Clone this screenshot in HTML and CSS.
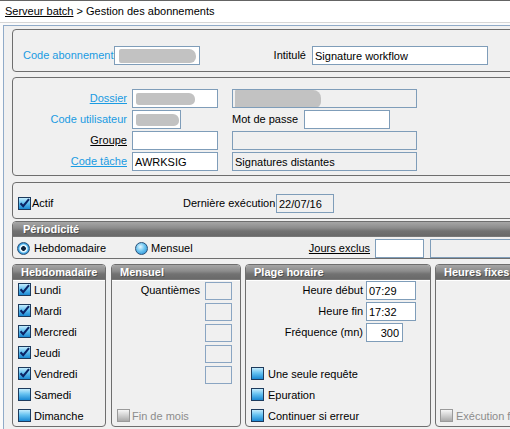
FILE: index.html
```html
<!DOCTYPE html>
<html lang="fr">
<head>
<meta charset="utf-8">
<title>Gestion des abonnements</title>
<link rel="stylesheet" href="styles.css">
</head>
<body>
<div class="top"><span class="u">Serveur batch</span> &gt; Gestion des abonnements</div>
<div class="main">
  <div class="box box1">
    <span class="lbl blue w-abo">Code abonnement</span>
    <div class="inp w86"><div class="blob b1"></div></div>
    <span class="lbl w-int">Intitulé</span>
    <div class="inp w176">Signature workflow</div>
  </div>

  <div class="box box2">
    <div class="row">
      <span class="lbl rl blue u">Dossier</span>
      <div class="inp w86"><div class="blob b2"></div></div>
      <div class="inp ro w185 ml14"><div class="blob b3"></div></div>
    </div>
    <div class="row">
      <span class="lbl rl blue">Code utilisateur</span>
      <div class="inp w49"><div class="blob b4"></div></div>
      <span class="lbl w-mdp">Mot de passe</span>
      <div class="inp w86"></div>
    </div>
    <div class="row">
      <span class="lbl rl u">Groupe</span>
      <div class="inp w86"></div>
      <div class="inp ro w185 ml14"></div>
    </div>
    <div class="row">
      <span class="lbl rl blue u">Code tâche</span>
      <div class="inp w86">AWRKSIG</div>
      <div class="inp ro w185 ml14">Signatures distantes</div>
    </div>
  </div>

  <div class="box box3">
    <div class="actif">
      <span class="cb on"><svg viewBox="0 0 11 11" width="11" height="11"><path d="M1.5 5.2 L4.2 8.2 L10 1.2" fill="none" stroke="#0b2466" stroke-width="2.1"/></svg></span>
      <span class="lbl">Actif</span>
    </div>
    <span class="lbl w-der">Dernière exécution</span>
    <div class="inp ro w58">22/07/16</div>
  </div>

  <div class="box period">
    <div class="ghead">Périodicité</div>
    <div class="pbody">
      <div class="ritem w118"><span class="rb on"></span><span class="lbl">Hebdomadaire</span></div>
      <div class="ritem w120 g3"><span class="rb"></span><span class="lbl">Mensuel</span></div>
      <span class="lbl u w-jours">Jours exclus</span>
      <div class="inp w49"></div>
      <div class="inp ro w100 ml6"></div>
    </div>
  </div>

  <div class="panels">
    <div class="panel">
      <div class="ghead phead">Hebdomadaire</div>
      <div class="hbody">
        <div class="crow"><span class="cb on"><svg viewBox="0 0 11 11" width="11" height="11"><path d="M1.5 5.2 L4.2 8.2 L10 1.2" fill="none" stroke="#0b2466" stroke-width="2.1"/></svg></span><span>Lundi</span></div>
        <div class="crow"><span class="cb on"><svg viewBox="0 0 11 11" width="11" height="11"><path d="M1.5 5.2 L4.2 8.2 L10 1.2" fill="none" stroke="#0b2466" stroke-width="2.1"/></svg></span><span>Mardi</span></div>
        <div class="crow"><span class="cb on"><svg viewBox="0 0 11 11" width="11" height="11"><path d="M1.5 5.2 L4.2 8.2 L10 1.2" fill="none" stroke="#0b2466" stroke-width="2.1"/></svg></span><span>Mercredi</span></div>
        <div class="crow"><span class="cb on"><svg viewBox="0 0 11 11" width="11" height="11"><path d="M1.5 5.2 L4.2 8.2 L10 1.2" fill="none" stroke="#0b2466" stroke-width="2.1"/></svg></span><span>Jeudi</span></div>
        <div class="crow"><span class="cb on"><svg viewBox="0 0 11 11" width="11" height="11"><path d="M1.5 5.2 L4.2 8.2 L10 1.2" fill="none" stroke="#0b2466" stroke-width="2.1"/></svg></span><span>Vendredi</span></div>
        <div class="crow"><span class="cb"></span><span>Samedi</span></div>
        <div class="crow"><span class="cb"></span><span>Dimanche</span></div>
      </div>
    </div>

    <div class="panel">
      <div class="ghead phead">Mensuel</div>
      <div class="mbody">
        <div class="qrow"><span class="lbl">Quantièmes</span><div class="qbox"></div></div>
        <div class="qbox"></div>
        <div class="qbox"></div>
        <div class="qbox"></div>
        <div class="qbox"></div>
        <div class="crow bottom-row dis"><span class="cb off"></span><span>Fin de mois</span></div>
      </div>
    </div>

    <div class="panel">
      <div class="ghead phead">Plage horaire</div>
      <div class="pl-body">
        <div class="frow"><span class="lbl w117">Heure début</span><div class="inp w50">07:29</div></div>
        <div class="frow"><span class="lbl w117">Heure fin</span><div class="inp w50">17:32</div></div>
        <div class="frow"><span class="lbl w117">Fréquence (mn)</span><div class="inp w37 num">300</div></div>
        <div class="checks">
          <div class="crow g4"><span class="cb"></span><span>Une seule requête</span></div>
          <div class="crow g4"><span class="cb"></span><span>Epuration</span></div>
          <div class="crow g4"><span class="cb"></span><span>Continuer si erreur</span></div>
        </div>
      </div>
    </div>

    <div class="panel">
      <div class="ghead phead">Heures fixes</div>
      <div class="hf-body">
        <div class="crow bottom-row dis g3 pl4"><span class="cb off"></span><span>Exécution fixe</span></div>
      </div>
    </div>
  </div>
</div>
</body>
</html>
```

FILE: styles.css
```css
* { box-sizing: border-box; }
html, body { margin: 0; padding: 0; }
body {
  width: 510px;
  height: 429px;
  overflow: hidden;
  background: #fafafa;
  font-family: "Liberation Sans", Arial, sans-serif;
  font-size: 11px;
  color: #000;
}
.top {
  height: 23px;
  background: #fff;
  border-top: 1px solid #646464;
  border-bottom: 1px solid #d6d6d6;
  padding-left: 5px;
  line-height: 20px;
  white-space: nowrap;
}
.u { text-decoration: underline; }
.blue { color: #1a9be2; }

.main {
  margin-top: 2px;
  margin-left: 3px;
  border-top: 1px solid #90abc9;
  border-left: 1px solid #90abc9;
  background: #f0f0f0;
  padding: 3px 0 0 8px;
  width: 540px;
  height: 404px;
}

.box {
  border: 1px solid #6e6e6e;
  border-radius: 4px;
  width: 520px;
}
.lbl { line-height: 19px; white-space: nowrap; }

.inp {
  height: 19px;
  border: 1px solid #7f9db9;
  background: #fff;
  padding: 0 2px;
  display: flex;
  align-items: center;
  white-space: nowrap;
  overflow: hidden;
  flex: none;
}
.inp.ro { background: #f0f0f0; }
.num { justify-content: flex-end; padding-right: 3px; }

.w37 { width: 37px; }
.w49 { width: 49px; }
.w50 { width: 50px; }
.w58 { width: 58px; }
.w86 { width: 86px; }
.w100 { width: 100px; }
.w176 { width: 176px; }
.w185 { width: 185px; }
.ml6 { margin-left: 6px; }
.ml14 { margin-left: 14px; }

.blob {
  background: #c2c2c2;
  filter: blur(0.6px);
  flex: none;
}
.b1 { width: 77px; height: 14px; margin-left: 2px; border-radius: 2px 7px 6px 2px; }
.b2 { width: 59px; height: 12px; margin-left: 1px; border-radius: 2px 6px 5px 3px; }
.b3 { width: 86px; height: 18px; margin-left: 0; border-radius: 1px 8px 6px 1px; }
.b4 { width: 43px; height: 12px; margin-left: 1px; border-radius: 2px 6px 5px 3px; }

/* box 1 */
.box1 {
  height: 43px;
  padding: 16px 0 0 10px;
  display: flex;
  align-items: flex-start;
}
.w-abo { width: 91px; }
.w-int { width: 112px; text-align: right; padding-right: 6px; }

/* box 2 */
.box2 {
  margin-top: 5px;
  height: 99px;
  padding-top: 11px;
  display: flex;
  flex-direction: column;
  gap: 2px;
}
.row { display: flex; align-items: center; height: 19px; }
.rl { width: 114px; text-align: right; margin-right: 5px; flex: none; }
.w-mdp { width: 72px; margin-left: 51px; }

/* box 3 */
.box3 {
  margin-top: 6px;
  height: 37px;
  padding: 11px 0 0 5px;
  display: flex;
  align-items: flex-start;
}
.actif { width: 165px; height: 19px; display: flex; align-items: center; gap: 1px; }
.w-der { width: 93px; }

/* checkboxes / radios */
.cb {
  width: 13px;
  height: 13px;
  border: 1px solid #1d3a5c;
  background: linear-gradient(#c4ecfd 0%, #66c2f1 45%, #1a88d3 100%);
  flex: none;
  display: flex;
  align-items: center;
  justify-content: center;
}
.cb svg { display: block; }
.cb.off {
  border-color: #9a9a9a;
  background: linear-gradient(#f6f6f6 0%, #d0d0d0 50%, #a9a9a9 100%);
}
.rb {
  width: 13px;
  height: 13px;
  border-radius: 50%;
  border: 1px solid #2a5178;
  background: radial-gradient(circle at 40% 35%, #e4f7ff 0, #6cc4f0 45%, #1a84cf 100%);
  flex: none;
}
.rb.on {
  background: radial-gradient(circle, #0f223c 0, #0f223c 2px, #f2fbff 2.7px, #cfeefd 3.6px, #4eb0e8 4.6px, #1b7cc6 6px);
}

/* period */
.period {
  margin-top: 2px;
  height: 38px;
  overflow: hidden;
}
.ghead {
  height: 15px;
  line-height: 15px;
  background: linear-gradient(#a6a6a6 0%, #8c8c8c 40%, #727272 60%, #6a6a6a 90%, #7e7e7e 100%);
  color: #fff;
  font-weight: bold;
  padding-left: 10px;
  text-shadow: 1px 1px 0 rgba(40, 40, 40, 0.45);
  white-space: nowrap;
}
.pbody {
  padding: 1px 0 0 4px;
  display: flex;
  align-items: center;
  height: 21px;
}
.ritem { display: flex; align-items: center; gap: 4px; flex: none; }
.ritem.g3 { gap: 3px; }
.w118 { width: 118px; }
.w120 { width: 120px; }
.w-jours { width: 120px; text-align: right; padding-right: 5px; flex: none; }

/* bottom panels */
.panels {
  margin-top: 5px;
  display: grid;
  grid-template-columns: 94px 130px 185px 100px;
  column-gap: 5px;
  height: 163px;
}
.panels .panel:nth-child(3) { margin-left: -1px; }
.panels .panel:nth-child(4) { margin-left: -1px; }
.panel {
  border: 1px solid #6e6e6e;
  border-radius: 4px;
  overflow: hidden;
  display: flex;
  flex-direction: column;
  background: #f0f0f0;
}
.phead {
  padding-left: 8px;
  border-bottom: 1px solid #fff;
  flex: none;
  height: 16px;
}
.crow {
  height: 21px;
  display: flex;
  align-items: center;
  gap: 3px;
  white-space: nowrap;
  flex: none;
}
.crow.g4 { gap: 4px; }
.dis { color: #8c8c8c; }
.hbody { padding-left: 5px; margin-top: -2px; display: flex; flex-direction: column; }

.mbody {
  flex: 1;
  display: flex;
  flex-direction: column;
  align-items: flex-end;
  gap: 3px;
  padding-right: 8px;
}
.qrow { display: flex; align-items: center; gap: 5px; }
.qbox {
  width: 27px;
  height: 18px;
  border: 1px solid #8aa5c2;
  background: #f0f0f0;
}
.bottom-row { margin-top: auto; align-self: flex-start; padding-left: 5px; }
.bottom-row.pl4 { padding-left: 4px; }
.crow.bottom-row.g3 { gap: 3px; }
.mbody .bottom-row { gap: 2px; }

.pl-body {
  flex: 1;
  display: flex;
  flex-direction: column;
  gap: 2px;
}
.frow { display: flex; align-items: center; }
.w117 { width: 117px; text-align: right; margin-right: 3px; flex: none; }
.checks { margin-top: auto; padding-left: 5px; display: flex; flex-direction: column; }

.hf-body { flex: 1; display: flex; flex-direction: column; }
```
